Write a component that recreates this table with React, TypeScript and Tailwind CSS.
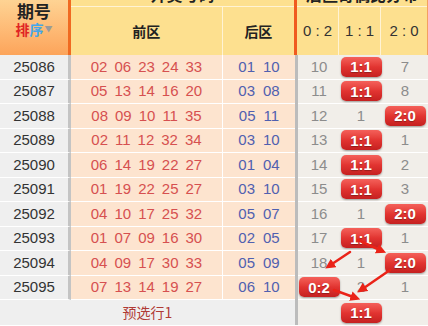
import React from 'react';

type Row = { id: string; front: string[]; back: string[]; dist: string[]; hit: number };

const labels = ['0:2', '1:1', '2:0'];

const rows: Row[] = [
  { id: '25086', front: ['02', '06', '23', '24', '33'], back: ['01', '10'], dist: ['10', '', '7'], hit: 1 },
  { id: '25087', front: ['05', '13', '14', '16', '20'], back: ['03', '08'], dist: ['11', '', '8'], hit: 1 },
  { id: '25088', front: ['08', '09', '10', '11', '35'], back: ['05', '11'], dist: ['12', '1', ''], hit: 2 },
  { id: '25089', front: ['02', '11', '12', '32', '34'], back: ['03', '10'], dist: ['13', '', '1'], hit: 1 },
  { id: '25090', front: ['06', '14', '19', '22', '27'], back: ['01', '04'], dist: ['14', '', '2'], hit: 1 },
  { id: '25091', front: ['01', '19', '22', '25', '27'], back: ['03', '10'], dist: ['15', '', '3'], hit: 1 },
  { id: '25092', front: ['04', '10', '17', '25', '32'], back: ['05', '07'], dist: ['16', '1', ''], hit: 2 },
  { id: '25093', front: ['01', '07', '09', '16', '30'], back: ['02', '05'], dist: ['17', '', '1'], hit: 1 },
  { id: '25094', front: ['04', '09', '17', '30', '33'], back: ['05', '09'], dist: ['18', '1', ''], hit: 2 },
  { id: '25095', front: ['07', '13', '14', '19', '27'], back: ['06', '10'], dist: ['', '2', '1'], hit: 0 },
];

const distWidths = ['w-[42px]', 'w-[42px]', 'w-[46px]'];

function Badge({ label }: { label: string }) {
  return (
    <div className="flex h-[20px] w-[41px] items-center justify-center rounded-[5px] bg-gradient-to-b from-[#f4605a] via-[#e23431] to-[#c52020] text-[15px] font-bold leading-none text-white shadow-[0_1px_2px_rgba(0,0,0,0.35)] [text-shadow:0_1px_1px_rgba(0,0,0,0.3)]">
      {label}
    </div>
  );
}

export default function App() {
  return (
    <div className="relative h-[326px] w-[428px] overflow-hidden bg-white font-['Liberation_Sans','Noto_Sans_CJK_SC',sans-serif]">
      <div className="-mt-[19px]">
        {/* Header */}
        <div className="flex h-[74px]">
          <div className="flex w-[71px] flex-col items-center justify-end gap-[1px] border-r-[3px] border-[#f06a21] bg-gradient-to-b from-[#fde3a6] to-[#fca45a] pb-[18px]">
            <div className="font-['Noto_Sans_CJK_SC',sans-serif] text-[17px] font-bold leading-[19px] text-[#222]">期号</div>
            <div className="flex items-center font-['Noto_Sans_CJK_SC',sans-serif] text-[14px] font-bold leading-[16px]">
              <span className="text-[#e02424]">排</span>
              <span className="text-[#45a6ea]">序</span>
              <span className="ml-[1px] text-[8px] text-[#9a9a9a]">▼</span>
            </div>
          </div>
          <div className="flex w-[227px] flex-col border-r-[3px] border-[#f05a1e] bg-[#fde08f]">
            <div className="flex h-[26px] items-center justify-center border-b border-[#fff3d4] font-['Noto_Sans_CJK_SC',sans-serif] text-[16px] font-bold text-[#222]">
              开奖号码
            </div>
            <div className="flex flex-1 font-['Noto_Sans_CJK_SC',sans-serif] text-[14px] font-bold text-[#222]">
              <div className="flex w-[152px] items-center justify-center border-r border-[#fff3d4]">前区</div>
              <div className="flex flex-1 items-center justify-center">后区</div>
            </div>
          </div>
          <div className="flex flex-1 flex-col border-r border-[#f3a060] bg-[#fde08f]">
            <div className="flex h-[26px] items-center justify-center border-b border-[#fff3d4] font-['Noto_Sans_CJK_SC',sans-serif] text-[16px] font-bold text-[#222]">
              后区奇偶比分布
            </div>
            <div className="flex flex-1 text-[15px] text-[#333]">
              {labels.map((l, i) => (
                <div key={l} className={`flex items-center justify-center ${distWidths[i]} ${i < 2 ? 'border-r border-[#fff3d4]' : ''}`}>
                  {l.replace(':', ' : ')}
                </div>
              ))}
            </div>
          </div>
        </div>

        {/* Body */}
        {rows.map((r) => (
          <div key={r.id} className="flex h-[24.5px]">
            <div className="flex w-[71px] items-center justify-center border-r-[3px] border-b border-r-[#c4c4c4] border-b-white bg-[#efefef] text-[15px] text-[#333]">
              {r.id}
            </div>
            <div className="flex w-[152px] items-center justify-center gap-[7px] border-r border-b border-white bg-[#fde4cf] text-[15px] text-[#d65050]">
              {r.front.map((n, i) => (
                <span key={i}>{n}</span>
              ))}
            </div>
            <div className="flex w-[72px] items-center justify-center gap-[8px] border-b border-white bg-[#fde4cf] text-[15px] text-[#5060b0]">
              {r.back.map((n, i) => (
                <span key={i}>{n}</span>
              ))}
            </div>
            <div className="flex flex-1 border-l-[3px] border-[#bcbcbc] bg-[#f1eee9]">
              {r.dist.map((d, i) => (
                <div key={i} className={`flex items-center justify-center border-b border-white text-[15px] text-[#8c8c8c] ${distWidths[i]}`}>
                  {r.hit === i ? <Badge label={labels[i]} /> : d}
                </div>
              ))}
            </div>
          </div>
        ))}

        <div className="flex h-[25px]">
          <div className="flex w-[295px] items-center justify-center bg-[#efefef] font-['Noto_Sans_CJK_SC',sans-serif] text-[14px] text-[#b03a35]">
            预选行1
          </div>
          <div className="flex flex-1 border-l-[3px] border-[#bcbcbc] bg-[#f1eee9]">
            <div className="w-[42px]" />
            <div className="flex w-[42px] items-center justify-center">
              <Badge label="1:1" />
            </div>
            <div className="w-[46px]" />
          </div>
        </div>
      </div>

      {/* Arrows */}
      <svg className="pointer-events-none absolute left-0 top-0" width="428" height="326" viewBox="0 0 428 326">
        <defs>
          <marker id="ah" markerWidth="4" markerHeight="4" refX="2.2" refY="2" orient="auto" markerUnits="strokeWidth">
            <path d="M0,0 L4,2 L0,4 Z" fill="#ea2318" />
          </marker>
        </defs>
        <g stroke="#ea2318" strokeWidth="2.5" strokeLinecap="round" fill="none">
          <line x1="358" y1="240" x2="382" y2="251" markerEnd="url(#ah)" />
          <line x1="350" y1="252" x2="329" y2="266" markerEnd="url(#ah)" />
          <line x1="390" y1="270" x2="361" y2="290" markerEnd="url(#ah)" />
          <line x1="334" y1="290" x2="356" y2="298" markerEnd="url(#ah)" />
        </g>
      </svg>
    </div>
  );
}
